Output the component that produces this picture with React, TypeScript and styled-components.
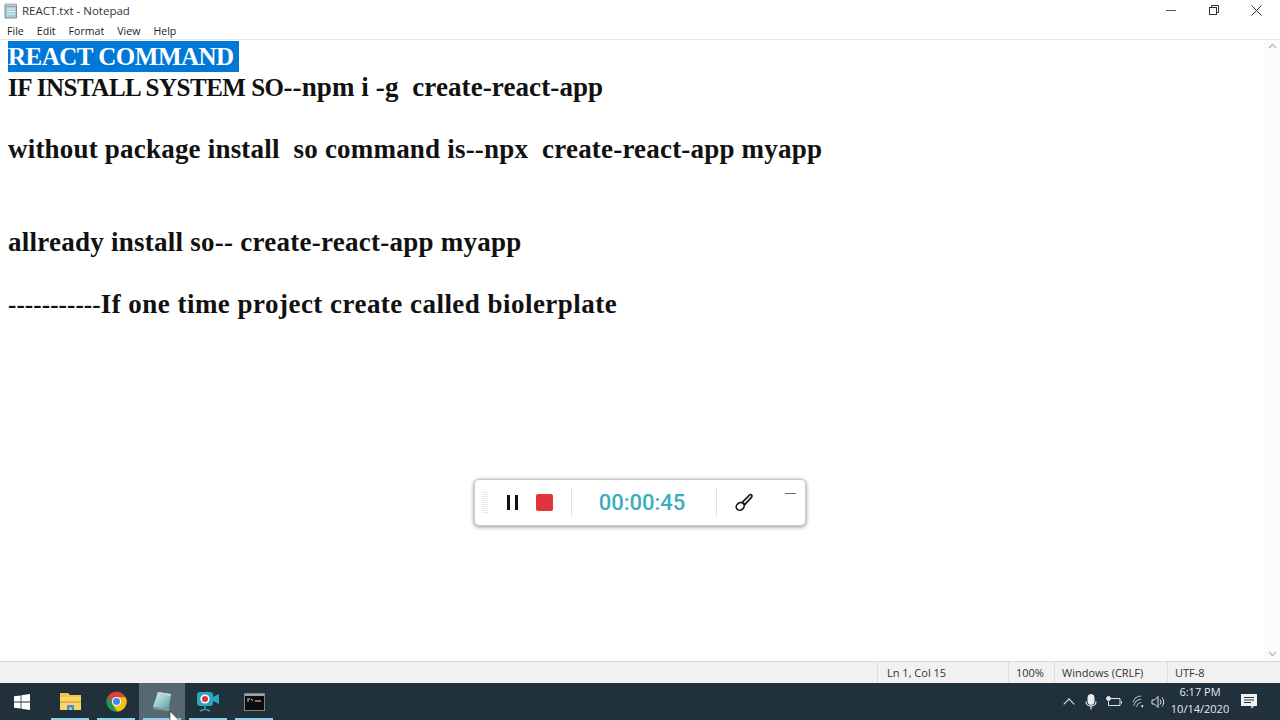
import styled, { createGlobalStyle } from "styled-components";

const Global = createGlobalStyle`
  html, body {
    margin: 0;
    padding: 0;
    background: #fff;
    overflow: hidden;
  }
  body {
    font-family: "Segoe UI", "Open Sans", "Noto Sans", sans-serif;
  }
`;

const menus = ["File", "Edit", "Format", "View", "Help"];

const NotepadIcon = () => (
  <svg width="15" height="16" viewBox="0 0 15 16">
    <path d="M2 2.500h11.500v12.500H2z" fill="#a9ccd6" stroke="#7d8b93" />
    <path d="M2 1h11.500v2.500H2z" fill="#c3c9cc" stroke="#7d8b93" strokeWidth="0.6" />
    <path d="M4 6h8M4 8.500h8M4 11h8" stroke="#e6f2f5" strokeWidth="1" />
  </svg>
);

const MinimizeIcon = () => (
  <svg width="10" height="10" viewBox="0 0 10 10">
    <path d="M0 5.500h10" stroke="#555" strokeWidth="1" />
  </svg>
);

const RestoreIcon = () => (
  <svg width="10" height="10" viewBox="0 0 10 10" fill="none" stroke="#333" strokeWidth="1">
    <rect x="0.5" y="2.500" width="7" height="7" />
    <path d="M2.500 2.500v-2h7v7h-2" />
  </svg>
);

const CloseIcon = () => (
  <svg width="11" height="11" viewBox="0 0 11 11" stroke="#333" strokeWidth="1">
    <path d="M0.500 0.500l10 10M10.500 0.500l-10 10" />
  </svg>
);

const ScrollChevron = ({ down }: { down?: boolean }) => (
  <svg width="9" height="6" viewBox="0 0 9 6" fill="none" stroke="#b8b8b8" strokeWidth="1.3">
    <path d={down ? "M1 1l3.500 3.500L8 1" : "M1 5l3.500-3.500L8 5"} />
  </svg>
);

const WindowsLogo = () => (
  <svg width="16" height="16" viewBox="0 0 16 16" fill="#fff">
    <path d="M0 2.300l6.600-.9v6.200H0zM7.400 1.300L16 0v7.600H7.400zM0 8.400h6.600v6.200L0 13.700zM7.400 8.400H16V16l-8.600-1.200z" />
  </svg>
);

const FolderIcon = () => (
  <svg width="21" height="19" viewBox="0 0 21 19">
    <path d="M0 1h8l2 2h11v15H0z" fill="#f3c64a" />
    <rect x="0" y="5" width="21" height="13" fill="#f7d56c" />
    <rect x="0" y="9" width="21" height="2" fill="#e4b23c" />
    <path d="M7 18v-5h7v5h-2.400v-2.400H9.400V18z" fill="#3f8fd2" />
  </svg>
);

const ChromeIcon = () => (
  <svg width="21" height="21" viewBox="0 0 48 48">
    <circle cx="24" cy="24" r="23" fill="#db4437" />
    <path d="M24 14h21a23 23 0 0 1-20 33L14 30z" fill="#f4c20d" />
    <path d="M4.100 12.500L14 30l11 17A23 23 0 0 1 4.100 12.500z" fill="#0f9d58" />
    <circle cx="24" cy="24" r="10.500" fill="#fff" />
    <circle cx="24" cy="24" r="8" fill="#4285f4" />
  </svg>
);

const NotepadTaskIcon = () => (
  <svg width="22" height="22" viewBox="0 0 22 22">
    <defs>
      <linearGradient id="padFill" x1="0" y1="0" x2="1" y2="1">
        <stop offset="0" stopColor="#e2f1f0" />
        <stop offset="0.5" stopColor="#9ccccb" />
        <stop offset="1" stopColor="#4f9aa3" />
      </linearGradient>
    </defs>
    <path d="M7 1l13 2-2 15-16-2z" fill="url(#padFill)" />
    <path d="M7 1l13 2-.3 2L6 3z" fill="#c9d2d5" />
    <path d="M2 16l16 2 0 2-15-2z" fill="#8d9aa1" />
  </svg>
);

const RecorderIcon = () => (
  <svg width="24" height="22" viewBox="0 0 24 22">
    <rect x="1" y="1" width="16" height="14" rx="3" fill="#2aa7bd" />
    <path d="M17 6l6-3v10l-6-3z" fill="#2aa7bd" />
    <circle cx="9" cy="8" r="4.600" fill="#fff" />
    <circle cx="9" cy="8" r="3" fill="#d8333a" />
    <path d="M9 15v3M4 20l5-2 5 2" stroke="#2aa7bd" strokeWidth="1.500" fill="none" />
  </svg>
);

const TerminalIcon = () => (
  <svg width="21" height="18" viewBox="0 0 21 18">
    <rect x="0.500" y="0.500" width="20" height="17" fill="#0b0b0b" stroke="#7b8488" />
    <rect x="1" y="1" width="19" height="2" fill="#9aa3a7" />
    <path d="M3 6h3M7 6l2 1.500M11 8h6" stroke="#e8e8e8" strokeWidth="1" />
    <path d="M3 8h2" stroke="#bbb" strokeWidth="1" />
  </svg>
);

const MicIcon = () => (
  <svg width="12" height="16" viewBox="0 0 12 16" fill="none" stroke="#e8eef0">
    <rect x="3" y="0.500" width="6" height="10" rx="3" fill="#e8eef0" />
    <path d="M1 7.500c0 6 10 6 10 0M6 12.500v3" strokeWidth="1.200" />
  </svg>
);

const BatteryIcon = () => (
  <svg width="16" height="12" viewBox="0 0 16 12" fill="none" stroke="#dfe6e9">
    <circle cx="2.500" cy="2.500" r="2" fill="#dfe6e9" />
    <path d="M5 2.500h9v7H2.500V5.500M15.500 5v2.500" strokeWidth="1" />
  </svg>
);

const WifiIcon = () => (
  <svg width="13" height="13" viewBox="0 0 14 14" fill="none" stroke="#aab6bb" strokeWidth="1.100">
    <path d="M1 8a9 9 0 0 1 9-7M2 12a8 8 0 0 1 8-7.500M5 13a5 5 0 0 1 5-5" />
    <circle cx="11" cy="12" r="1.200" fill="#dfe6e9" stroke="none" />
  </svg>
);

const VolumeIcon = () => (
  <svg width="15" height="14" viewBox="0 0 15 14" fill="none" stroke="#dfe6e9" strokeWidth="1">
    <path d="M1 5h2.500L7 1.500v11L3.500 9H1z" />
    <path d="M9 4.500a3.500 3.500 0 0 1 0 5M11 2.500a6.500 6.500 0 0 1 0 9" />
  </svg>
);

const NotificationIcon = () => (
  <svg width="16" height="15" viewBox="0 0 16 15">
    <path d="M0 0h16v12h-3l-2.500 3V12H0z" fill="#eef2f3" />
    <path d="M3 3.500h10M3 6h10M3 8.500h7" stroke="#24333d" strokeWidth="1" />
  </svg>
);

const BrushIcon = () => (
  <svg width="19" height="19" viewBox="0 0 19 19" stroke="#111" strokeWidth="1.600">
    <path d="M7 9.500L14.500 2c1.300-1.200 3.200.4 2.300 2L10 11.500z" fill="#bfe6e2" />
    <ellipse cx="5.200" cy="13.400" rx="4.200" ry="3.600" transform="rotate(-38 5.200 13.400)" fill="#fff" />
  </svg>
);

const CursorIcon = () => (
  <svg width="11" height="16" viewBox="0 0 11 16">
    <path d="M1 0v13l3-3 2 5 2-1-2-4.500h4z" fill="#fff" stroke="#222" strokeWidth="0.600" />
  </svg>
);

export default function App() {
  return (
    <>
      <Global />
      <Screen>
        <TitleBar>
          <TitleLeft>
            <NotepadIcon />
            <TitleText>REACT.txt - Notepad</TitleText>
          </TitleLeft>
          <WindowButtons>
            <WindowButton><MinimizeIcon /></WindowButton>
            <WindowButton><RestoreIcon /></WindowButton>
            <WindowButton><CloseIcon /></WindowButton>
          </WindowButtons>
        </TitleBar>
        <MenuBar>
          {menus.map((m) => (
            <MenuItem key={m}>{m}</MenuItem>
          ))}
        </MenuBar>
        <EditorRow>
          <Editor>
            <Line><Selected>REACT COMMAND </Selected></Line>
            <Line>
              <Caps $ls={-0.5}>IF INSTALL SYSTEM SO</Caps>
              <Seg $ls={0.1}>--npm i -g  create-react-app</Seg>
            </Line>
            <Line />
            <Line><Seg $ls={0.2}>without package install  so command is--npx  create-react-app myapp</Seg></Line>
            <Line />
            <Line />
            <Line><Seg $ls={0.25}>allready install so-- create-react-app myapp</Seg></Line>
            <Line />
            <Line>
              <Caps $ls={0.1}>-----------</Caps>
              <Seg $ls={0.47}>If one time project create called biolerplate</Seg>
            </Line>
          </Editor>
          <ScrollTrack>
            <ScrollChevron />
            <ScrollChevron down />
          </ScrollTrack>
        </EditorRow>
        <StatusBar>
          <StatusCell $w={131} $pad={9}>Ln 1, Col 15</StatusCell>
          <StatusCell $w={46} $pad={7}>100%</StatusCell>
          <StatusCell $w={113} $pad={7}>Windows (CRLF)</StatusCell>
          <StatusCell $w={113} $pad={7}>UTF-8</StatusCell>
        </StatusBar>
        <Taskbar>
          <TaskLeft>
            <StartButton><WindowsLogo /></StartButton>
            <TaskButton><FolderIcon /></TaskButton>
            <TaskButton><ChromeIcon /></TaskButton>
            <TaskButton $active><NotepadTaskIcon /></TaskButton>
            <TaskButton><RecorderIcon /></TaskButton>
            <TaskButton><TerminalIcon /></TaskButton>
          </TaskLeft>
          <Tray>
            <Chevron />
            <TrayIcon $w={16}><MicIcon /></TrayIcon>
            <TrayIcon $w={30}><BatteryIcon /></TrayIcon>
            <TrayIcon $w={18}><WifiIcon /></TrayIcon>
            <TrayIcon $w={22}><VolumeIcon /></TrayIcon>
            <Clock>
              <span>6:17 PM</span>
              <span>10/14/2020</span>
            </Clock>
            <NotifyButton><NotificationIcon /></NotifyButton>
          </Tray>
        </Taskbar>
        <Recorder>
          <Grip />
          <PauseButton />
          <StopButton />
          <RecDivider />
          <Timer>00:00:45</Timer>
          <RecDivider $flush />
          <BrushBox><BrushIcon /></BrushBox>
          <MiniDash />
        </Recorder>
        <Cursor><CursorIcon /></Cursor>
      </Screen>
    </>
  );
}

const Screen = styled.div`
  position: relative;
  width: 1280px;
  height: 720px;
  display: flex;
  flex-direction: column;
  background: #fff;
  overflow: hidden;
`;

const TitleBar = styled.div`
  height: 22px;
  display: flex;
  justify-content: space-between;
  align-items: flex-start;
`;

const TitleLeft = styled.div`
  display: flex;
  align-items: center;
  gap: 4px;
  padding: 3px 0 0 3px;
`;

const TitleText = styled.span`
  font-size: 11.5px;
  line-height: 16px;
  color: #333;
`;

const WindowButtons = styled.div`
  display: flex;
  padding-right: 2px;
`;

const WindowButton = styled.div`
  width: 43px;
  height: 20px;
  display: flex;
  align-items: center;
  justify-content: center;
`;

const MenuBar = styled.div`
  height: 17px;
  display: flex;
  align-items: center;
  gap: 13px;
  padding-left: 7px;
  border-bottom: 1px solid #e6e6e6;
`;

const MenuItem = styled.span`
  font-size: 10.6px;
  color: #222;
`;

const EditorRow = styled.div`
  flex: 1;
  display: flex;
  min-height: 0;
`;

const Editor = styled.div`
  flex: 1;
  padding: 1px 0 0 8px;
  font-family: "Liberation Serif", "Times New Roman", serif;
  font-weight: 700;
  font-size: 27px;
  line-height: 31px;
  color: #111;
  white-space: pre;
`;

const Line = styled.div`
  height: 31px;
`;

const Seg = styled.span<{ $ls: number }>`
  letter-spacing: ${(p) => p.$ls}px;
`;

const Caps = styled.span<{ $ls: number }>`
  font-size: 25px;
  letter-spacing: ${(p) => p.$ls}px;
`;

const Selected = styled.span`
  display: inline-block;
  height: 31px;
  background: #0078d7;
  color: #fff;
  font-size: 25px;
  letter-spacing: -0.5px;
`;

const ScrollTrack = styled.div`
  width: 16px;
  box-sizing: border-box;
  padding: 3px 0 4px;
  background: #fbfbfb;
  display: flex;
  flex-direction: column;
  justify-content: space-between;
  align-items: center;
`;

const StatusBar = styled.div`
  height: 21px;
  display: flex;
  justify-content: flex-end;
  background: #f1f1f1;
  border-top: 1px solid #d7d7d7;
`;

const StatusCell = styled.div<{ $w: number; $pad: number }>`
  width: ${(p) => p.$w}px;
  box-sizing: border-box;
  padding-left: ${(p) => p.$pad}px;
  font-size: 11px;
  line-height: 22px;
  color: #333;
  border-left: 1px solid #dcdcdc;
`;

const Taskbar = styled.div`
  height: 37px;
  background: #20313c;
  display: flex;
  justify-content: space-between;
`;

const TaskLeft = styled.div`
  display: flex;
`;

const StartButton = styled.div`
  width: 47px;
  display: flex;
  align-items: center;
  justify-content: center;
  padding-right: 3px;
  box-sizing: border-box;
`;

const TaskButton = styled.div<{ $active?: boolean }>`
  position: relative;
  width: 46px;
  display: flex;
  align-items: center;
  justify-content: center;
  background: ${(p) => (p.$active ? "#566973" : "transparent")};
  &::after {
    content: "";
    position: absolute;
    left: 4px;
    right: 4px;
    bottom: 0;
    height: 2px;
    background: #8fd0ea;
  }
`;

const Tray = styled.div`
  display: flex;
  align-items: center;
  padding-right: 23px;
`;

const Chevron = styled.div`
  width: 7px;
  height: 7px;
  margin: 4px 10px 0 0;
  border-left: 1.5px solid #e3e9ec;
  border-top: 1.5px solid #e3e9ec;
  transform: rotate(45deg);
`;

const TrayIcon = styled.div<{ $w: number }>`
  width: ${(p) => p.$w}px;
  display: flex;
  justify-content: center;
`;

const Clock = styled.div`
  width: 56px;
  margin: -3px 0 0 3px;
  display: flex;
  flex-direction: column;
  align-items: center;
  font-size: 11px;
  line-height: 17px;
  color: #e3e9ec;
`;

const NotifyButton = styled.div`
  margin-left: 13px;
  display: flex;
`;

const Recorder = styled.div`
  position: absolute;
  left: 474px;
  top: 479px;
  width: 332px;
  height: 47px;
  box-sizing: border-box;
  background: #fff;
  border: 1px solid #c9c9c9;
  border-radius: 5px;
  box-shadow: 0 1px 4px rgba(0, 0, 0, 0.45);
  display: flex;
  align-items: center;
  padding-left: 7px;
`;

const Grip = styled.div`
  width: 6px;
  height: 22px;
  background: repeating-linear-gradient(to bottom, #e8e8e8 0 1px, transparent 1px 2px);
`;

const PauseButton = styled.div`
  width: 5px;
  height: 15px;
  margin-left: 19px;
  border-left: 3px solid #111;
  border-right: 3px solid #111;
`;

const StopButton = styled.div`
  width: 17px;
  height: 17px;
  margin-left: 18px;
  border-radius: 2px;
  background: #e0353b;
`;

const RecDivider = styled.div<{ $flush?: boolean }>`
  width: 1px;
  height: 30px;
  background: #e4e4e4;
  margin-left: ${(p) => (p.$flush ? 0 : 18)}px;
`;

const Timer = styled.div`
  width: 144px;
  box-sizing: border-box;
  padding-right: 4px;
  text-align: center;
  font-family: "Roboto", "Liberation Sans", sans-serif;
  font-weight: 500;
  font-size: 22px;
  color: #3aaebf;
`;

const BrushBox = styled.div`
  margin-left: 18px;
  display: flex;
`;

const MiniDash = styled.div`
  width: 11px;
  height: 1px;
  margin: -18px 0 0 31px;
  background: #666;
`;

const Cursor = styled.div`
  position: absolute;
  left: 169px;
  top: 711px;
  display: flex;
`;
